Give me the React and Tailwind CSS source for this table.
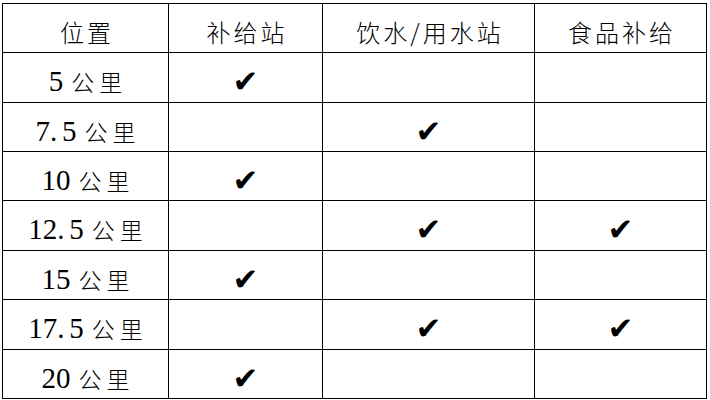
const ROWS = [
  { num: "5", checks: [true, false, false] },
  { num: "7.5", checks: [false, true, false] },
  { num: "10", checks: [true, false, false] },
  { num: "12.5", checks: [false, true, true] },
  { num: "15", checks: [true, false, false] },
  { num: "17.5", checks: [false, true, true] },
  { num: "20", checks: [true, false, false] },
];

const HEADERS = ["位置", "补给站", "饮水/用水站", "食品补给"];

const cjk = { fontFamily: '"Noto Sans CJK SC", "Liberation Serif", serif' };
const serif = { fontFamily: '"Liberation Serif", serif' };
const sym = { fontFamily: '"DejaVu Sans", sans-serif' };

function Cell({ children }) {
  return (
    <div className="border-l border-t border-black flex items-center justify-center pt-[8px] text-black">
      {children}
    </div>
  );
}

function Check() {
  return (
    <span style={sym} className="text-[31px] leading-none">
      ✔
    </span>
  );
}

// digits are set wide, the decimal point gets a full cell like in the doc
function Num({ value }) {
  const [a, b] = value.split(".");
  return (
    <span style={serif} className="text-[29px] leading-none flex items-center">
      <span>{a}</span>
      {b && (
        <>
          <span className="inline-block w-[12px]">.</span>
          <span>{b}</span>
        </>
      )}
    </span>
  );
}

export default function App() {
  return (
    <div className="w-[710px] h-[400px] bg-white pl-[2px] pt-[3px]">
      <div className="w-[705px] grid grid-cols-[166px_154px_212px_172px] grid-rows-[49px_50px_49px_49px_50px_49px_50px_49px] border-r border-b border-black">
        {HEADERS.map((h) => (
          <Cell key={h}>
            <span style={cjk} className="text-[24px] font-light leading-none tracking-[3px] pl-[3px]">
              {h}
            </span>
          </Cell>
        ))}
        {ROWS.map((r) => (
          <div key={r.num} className="contents">
            <Cell>
              <Num value={r.num} />
              <span style={cjk} className="text-[23px] font-light leading-none ml-[8px] tracking-[5px] mr-[-5px]">
                公里
              </span>
            </Cell>
            {r.checks.map((c, i) => (
              <Cell key={i}>{c && <Check />}</Cell>
            ))}
          </div>
        ))}
      </div>
    </div>
  );
}
